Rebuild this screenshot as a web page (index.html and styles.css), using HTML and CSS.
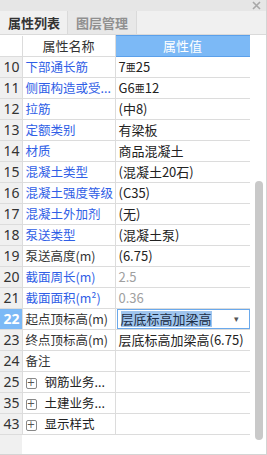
FILE: index.html
```html
<!DOCTYPE html>
<html lang="zh-CN">
<head>
    <meta charset="UTF-8">
    <title>属性列表</title>
    <link rel="stylesheet" href="styles.css">
</head>
<body>
    <div class="panel">
        <div class="titlebar">
            <svg class="close" width="9" height="9" viewBox="0 0 9 9">
                <path d="M1 1L8 8M8 1L1 8" stroke="#a8a8a8" stroke-width="1.6" fill="none"/>
            </svg>
        </div>
        <div class="tabs">
            <div class="tab active">属性列表</div>
            <div class="tab">图层管理</div>
        </div>
        <div class="content">
            <div class="grid-wrap">
                <table class="props">
                    <colgroup>
                        <col class="c-num">
                        <col class="c-name">
                        <col class="c-val">
                    </colgroup>
                    <thead>
                        <tr>
                            <th class="num"></th>
                            <th class="hname">属性名称</th>
                            <th class="hval">属性值</th>
                        </tr>
                    </thead>
                    <tbody>
                        <tr><td class="num">10</td><td class="name link">下部通长筋</td><td class="val">7<span class="bar">亜</span>25</td></tr>
                        <tr><td class="num">11</td><td class="name link">侧面构造或受...</td><td class="val">G6<span class="bar">亜</span>12</td></tr>
                        <tr><td class="num">12</td><td class="name link">拉筋</td><td class="val">(中8)</td></tr>
                        <tr><td class="num">13</td><td class="name link">定额类别</td><td class="val">有梁板</td></tr>
                        <tr><td class="num">14</td><td class="name link">材质</td><td class="val">商品混凝土</td></tr>
                        <tr><td class="num">15</td><td class="name link">混凝土类型</td><td class="val">(混凝土20石)</td></tr>
                        <tr><td class="num">16</td><td class="name link">混凝土强度等级</td><td class="val">(C35)</td></tr>
                        <tr><td class="num">17</td><td class="name link">混凝土外加剂</td><td class="val">(无)</td></tr>
                        <tr><td class="num">18</td><td class="name link">泵送类型</td><td class="val">(混凝土泵)</td></tr>
                        <tr><td class="num">19</td><td class="name">泵送高度(m)</td><td class="val">(6.75)</td></tr>
                        <tr><td class="num">20</td><td class="name link">截面周长(m)</td><td class="val muted">2.5</td></tr>
                        <tr><td class="num">21</td><td class="name link">截面面积(m²)</td><td class="val muted">0.36</td></tr>
                        <tr class="current">
                            <td class="num">22</td>
                            <td class="name">起点顶标高(m)</td>
                            <td class="val edit">
                                <div class="combo"><span class="sel">层底标高加梁高</span><span class="arrow">▾</span></div>
                            </td>
                        </tr>
                        <tr><td class="num">23</td><td class="name">终点顶标高(m)</td><td class="val">层底标高加梁高(6.75)</td></tr>
                        <tr><td class="num">24</td><td class="name">备注</td><td class="val"></td></tr>
                        <tr><td class="num">25</td><td class="name group"><span class="plus">+</span>钢筋业务...</td><td class="val"></td></tr>
                        <tr><td class="num">35</td><td class="name group"><span class="plus">+</span>土建业务...</td><td class="val"></td></tr>
                        <tr><td class="num">43</td><td class="name group"><span class="plus">+</span>显示样式</td><td class="val"></td></tr>
                    </tbody>
                </table>
                <div class="filler"><div class="filler-num"></div></div>
            </div>
            <div class="scroll-track"><div class="scroll-thumb"></div></div>
        </div>
    </div>
</body>
</html>
```
FILE: styles.css
```css
body {
    margin: 0;
    font-family: "Noto Sans CJK SC", "Noto Sans", sans-serif;
    font-size: 13px;
    color: #222;
    background: #fff;
}

.panel {
    width: 266px;
    height: 454px;
    border-right: 1px solid #d4d4d4;
    border-bottom: 1px solid #d4d4d4;
    display: flex;
    flex-direction: column;
    overflow: hidden;
}

.titlebar {
    height: 11px;
    background: #e6e6e6;
    position: relative;
}

.close {
    position: absolute;
    right: 5px;
    top: 1px;
}

.tabs {
    height: 23px;
    background: #f0f0f0;
    display: flex;
    border-bottom: 1px solid #dadada;
}

.tab {
    padding: 0 8px;
    line-height: 23px;
    font-size: 13px;
    color: #909090;
    font-weight: bold;
    border-right: 1px solid #dadada;
    background: #e8e8e8;
}

.tab.active {
    color: #333;
    background: #f0f0f0;
    padding: 0 7px 0 8px;
}

.content {
    flex: 1;
    display: flex;
    min-height: 0;
}

.grid-wrap {
    width: 250px;
    display: flex;
    flex-direction: column;
}

.props {
    border-collapse: collapse;
    table-layout: fixed;
    width: 250px;
}

.c-num { width: 22px; }
.c-name { width: 93px; }
.c-val { width: 135px; }

.props th,
.props td {
    height: 20px;
    padding: 0;
    border: 1px solid #dcdcdc;
    white-space: nowrap;
    overflow: hidden;
    line-height: 20px;
}

.props tr > :first-child {
    border-left: none;
}

.props thead th {
    border-top: none;
    font-weight: normal;
}

.hname {
    color: #333;
    text-align: center;
    background: #fff;
}

.hval {
    background: #7cb9f6;
    color: #fff;
    font-weight: bold;
    text-align: center;
    border: 1px solid #5ba0ea !important;
}

.num {
    background: #f0f0f0;
    text-align: right;
    padding-right: 2px !important;
    font-family: "Noto Sans", sans-serif;
    font-size: 14px;
    color: #333;
}

thead .num {
    background: #fff;
}

.name {
    padding-left: 3px !important;
    color: #333;
    font-size: 12.5px;
}

.name.link {
    color: #2f5ee6;
}

.val {
    padding-left: 3px !important;
    color: #222;
}

.val.muted {
    color: #a0a0a0;
}

.bar {
    font-size: 10px;
    vertical-align: 1px;
}

.current .num {
    background: #7cb9f6;
    color: #fff;
    font-weight: bold;
}

.val.edit {
    padding: 0 !important;
}

.combo {
    height: 18px;
    margin: 0 0 0 1px;
    border: 1px solid #6aa9ec;
    display: flex;
    align-items: center;
    padding-left: 3px;
    background: #fff;
}

.sel {
    background: #9fc5ee;
    line-height: 16px;
    color: #1d2d44;
}

.arrow {
    margin-left: auto;
    margin-right: 10px;
    font-size: 9px;
    color: #555;
}

.group {
    color: #222;
}

.plus {
    display: inline-block;
    width: 9px;
    height: 9px;
    line-height: 8px;
    border: 1px solid #888;
    border-radius: 2px;
    font-size: 10px;
    text-align: center;
    color: #555;
    margin-right: 8px;
    vertical-align: 1px;
    font-family: "DejaVu Sans", sans-serif;
}

.filler {
    flex: 1;
    display: flex;
}

.filler-num {
    width: 22px;
    background: #f0f0f0;
}

.scroll-track {
    flex: 1;
    position: relative;
    background: #fff;
}

.scroll-thumb {
    position: absolute;
    left: 5px;
    width: 8px;
    top: 146px;
    height: 259px;
    border-radius: 4px;
    background: #c9c9c9;
}
```
